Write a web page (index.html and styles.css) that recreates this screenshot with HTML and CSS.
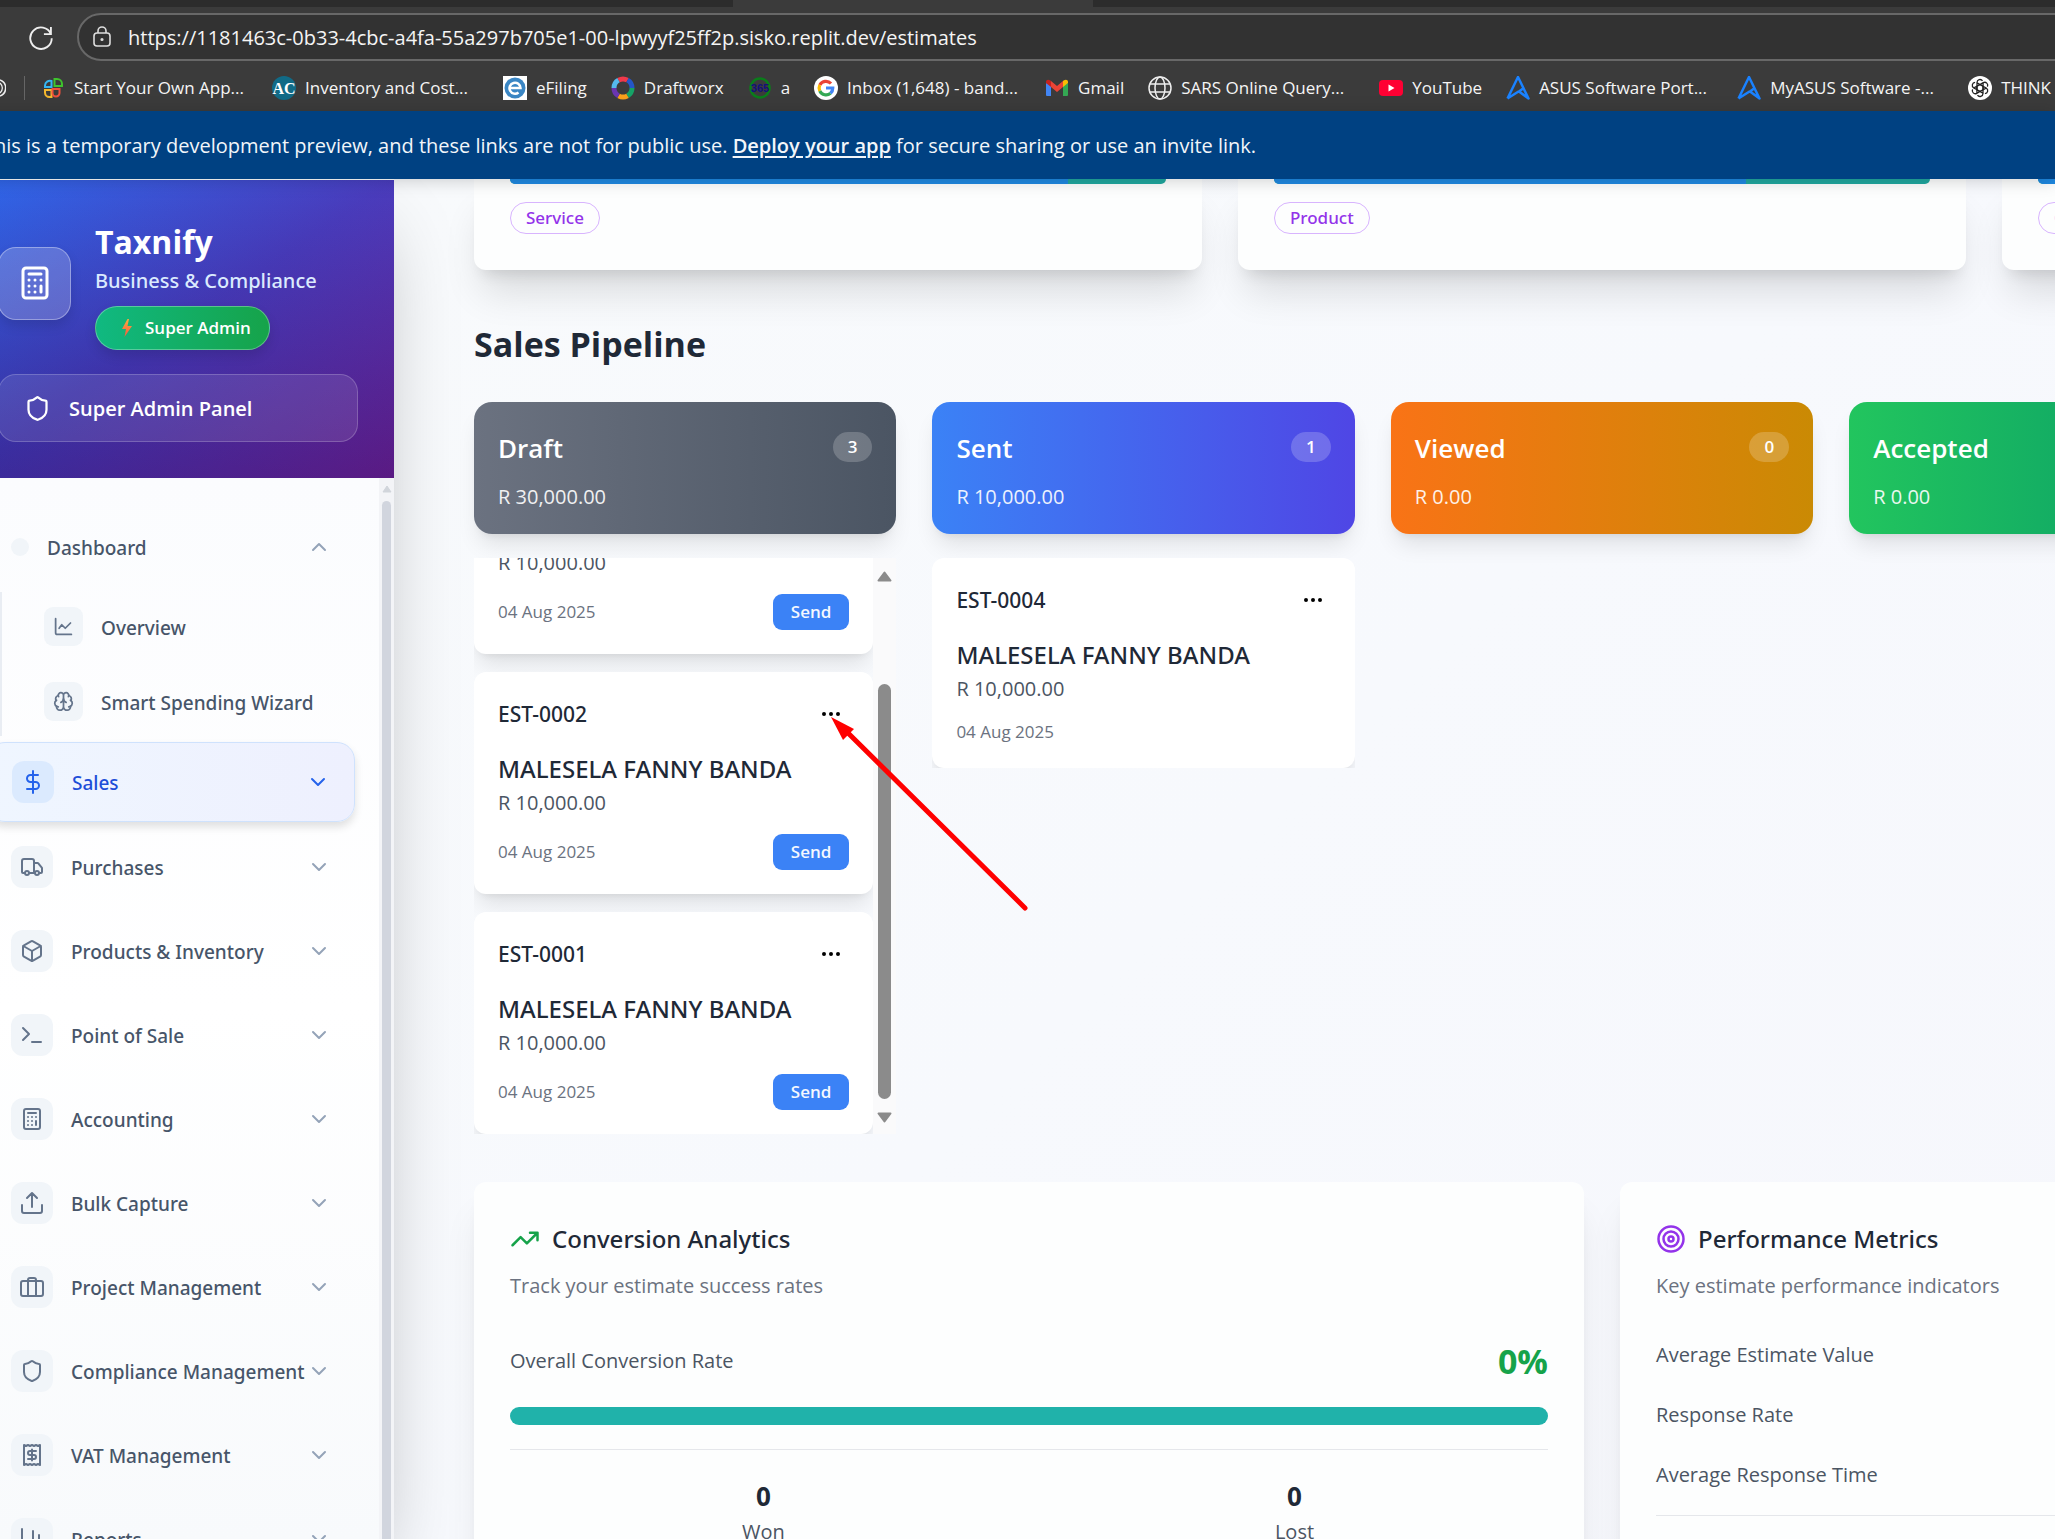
FILE: index.html
```html
<!DOCTYPE html>
<html lang="en">
<head>
<meta charset="utf-8">
<title>Estimates - Taxnify</title>
<link rel="stylesheet" href="styles.css">
</head>
<body>
<svg class="defs" aria-hidden="true">
  <symbol id="calculator" viewBox="0 0 24 24"><rect x="4" y="2" width="16" height="20" rx="2"/><path d="M8 6h8M16 14v4M16 10h.01M12 10h.01M8 10h.01M12 14h.01M8 14h.01M12 18h.01M8 18h.01"/></symbol>
  <symbol id="shield" viewBox="0 0 24 24"><path d="M20 13c0 5-3.500 7.500-7.660 8.950a1 1 0 0 1-.67-.01C7.500 20.500 4 18 4 13V6a1 1 0 0 1 1-1c2 0 4.500-1.200 6.240-2.720a1.170 1.170 0 0 1 1.520 0C14.510 3.810 17 5 19 5a1 1 0 0 1 1 1z"/></symbol>
  <symbol id="down" viewBox="0 0 24 24"><path d="m6 9 6 6 6-6"/></symbol>
  <symbol id="up" viewBox="0 0 24 24"><path d="m18 15-6-6-6 6"/></symbol>
  <symbol id="line" viewBox="0 0 24 24"><path d="M3 3v16a2 2 0 0 0 2 2h16"/><path d="m7 14 3-4 4 4 6-6"/></symbol>
  <symbol id="brain" viewBox="0 0 24 24"><path d="M12 5a3 3 0 1 0-5.997.125 4 4 0 0 0-2.526 5.770 4 4 0 0 0 .556 6.588A4 4 0 1 0 12 18ZM12 5a3 3 0 1 1 5.997.125 4 4 0 0 1 2.526 5.770 4 4 0 0 1-.556 6.588A4 4 0 1 1 12 18Z"/><path d="M15 13a4.500 4.500 0 0 1-3-4 4.500 4.500 0 0 1-3 4M17.599 6.500a3 3 0 0 0 .399-1.375M6.003 5.125A3 3 0 0 0 6.401 6.500M3.477 10.896a4 4 0 0 1 .585-.396M19.938 10.500a4 4 0 0 1 .585.396M6 18a4 4 0 0 1-1.967-.516M19.967 17.484A4 4 0 0 1 18 18"/></symbol>
  <symbol id="dollar" viewBox="0 0 24 24"><path d="M12 1v22M17 5H9.500a3.500 3.500 0 0 0 0 7h5a3.500 3.500 0 0 1 0 7H6"/></symbol>
  <symbol id="truck" viewBox="0 0 24 24"><path d="M14 18V6a2 2 0 0 0-2-2H4a2 2 0 0 0-2 2v11a1 1 0 0 0 1 1h2M15 18H9M19 18h2a1 1 0 0 0 1-1v-3.650a1 1 0 0 0-.22-.624l-3.480-4.350A1 1 0 0 0 17.520 8H14"/><circle cx="17" cy="18" r="2"/><circle cx="7" cy="18" r="2"/></symbol>
  <symbol id="box" viewBox="0 0 24 24"><path d="M21 8a2 2 0 0 0-1-1.730l-7-4a2 2 0 0 0-2 0l-7 4A2 2 0 0 0 3 8v8a2 2 0 0 0 1 1.730l7 4a2 2 0 0 0 2 0l7-4A2 2 0 0 0 21 16Z"/><path d="m3.300 7 8.700 5 8.700-5M12 22V12"/></symbol>
  <symbol id="terminal" viewBox="0 0 24 24"><path d="m3 17 6-6-6-6M12 19h9"/></symbol>
  <symbol id="upload" viewBox="0 0 24 24"><path d="M2 14v6a2 2 0 0 0 2 2h16a2 2 0 0 0 2-2v-6M17 7l-5-5-5 5M12 2v14"/></symbol>
  <symbol id="case" viewBox="0 0 24 24"><rect x="1" y="6" width="22" height="15" rx="2"/><path d="M16 21V5a2 2 0 0 0-2-2h-4a2 2 0 0 0-2 2v16"/></symbol>
  <symbol id="receipt" viewBox="0 0 24 24"><path d="M4 2v20l2-1 2 1 2-1 2 1 2-1 2 1 2-1 2 1V2l-2 1-2-1-2 1-2-1-2 1-2-1-2 1Z"/><path d="M16 8h-6a2 2 0 1 0 0 4h4a2 2 0 1 1 0 4H8M12 17.500v-11"/></symbol>
  <symbol id="chart" viewBox="0 0 24 24"><path d="M2 2v18a2 2 0 0 0 2 2h18M19 17V8M13 17V4M8 17v-3"/></symbol>
  <symbol id="dots" viewBox="0 0 24 24"><circle cx="12" cy="12" r="1"/><circle cx="19" cy="12" r="1"/><circle cx="5" cy="12" r="1"/></symbol>
  <symbol id="trend" viewBox="0 0 24 24"><path d="M22 7 13.500 15.500 8.500 10.500 2 17M16 7h6v6"/></symbol>
  <symbol id="target" viewBox="0 0 24 24"><circle cx="12" cy="12" r="10"/><circle cx="12" cy="12" r="6"/><circle cx="12" cy="12" r="2"/></symbol>
  <symbol id="asus" viewBox="0 0 24 24"><path d="M1.500 22.500 12 1l10.500 21.500-9.500-7 4-3M1.500 22.500l11-7" fill="none" stroke="#1a82ff" stroke-width="2.500" stroke-linejoin="round"/></symbol>
</svg>

<header class="browser">
  <div class="tabs"><div class="tab"></div></div>
  <div class="toolbar">
    <button class="reload" aria-label="Reload"><svg viewBox="0 0 24 24"><path d="M20.500 9.500A9.200 9.200 0 1 0 21.200 13M20.500 3.500v6h-6"/></svg></button>
    <label class="address">
      <svg viewBox="0 0 24 24"><rect x="4" y="8" width="16" height="13" rx="3"/><path d="M8 8V6a4 4 0 0 1 8 0v2"/><circle cx="12" cy="14.500" r=".8"/></svg>
      <input type="text" aria-label="Address" value="https://1181463c-0b33-4cbc-a4fa-55a297b705e1-00-lpwyyf25ff2p.sisko.replit.dev/estimates">
    </label>
  </div>
  <nav class="bookmarks" aria-label="Bookmarks">
    <span class="edge"><svg viewBox="0 0 6 24" fill="none" stroke="#eee" stroke-width="1.500"><path d="M0 4a8.500 8.500 0 0 1 0 16M0 7c3 3 3 7 0 10"/></svg></span>
    <a class="wide" href="#"><svg viewBox="0 0 24 24" fill="none" stroke-width="2"><path d="M10.500 11H4V9.500a5 5 0 0 1 6.500-4.500z" stroke="#35b6f2"/><path d="M13.500 10V3H16a5 5 0 0 1 5 5v2z" stroke="#3fc32d"/><path d="M10.500 14v7H8.500A4.500 4.500 0 0 1 4 16.500V14z" stroke="#f5b82e"/><path d="M11.500 13h7v4a3.500 3.500 0 0 1-7 0z" stroke="#f0503c"/></svg><span>Start Your Own App...</span></a>
    <a class="wide" href="#"><svg viewBox="0 0 24 24"><circle cx="12" cy="12" r="12" fill="#116a86"/><text x="12" y="18" text-anchor="middle" class="ac">AC</text></svg><span>Inventory and Cost...</span></a>
    <a href="#"><svg viewBox="0 0 24 24"><path fill="#fff" d="M0 0h24v24H0z"/><circle cx="12" cy="12" r="10.500" fill="#3a86c4"/><path d="M6.500 12h11a5.500 5.500 0 1 0-2 4.500" fill="none" stroke="#fff" stroke-width="2.500"/></svg><span>eFiling</span></a>
    <a href="#"><svg viewBox="0 0 24 24" fill="none" stroke-width="5"><path d="M7.500 4.200a9 9 0 0 1 9 0" stroke="#f0394b"/><path d="M16.500 4.200A9 9 0 0 1 21 12" stroke="#2456c8"/><path d="M21 12a9 9 0 0 1-4.500 7.800" stroke="#15a266"/><path d="M16.500 19.800a9 9 0 0 1-9 0" stroke="#f9a01b"/><path d="M7.500 19.800A9 9 0 0 1 3 12" stroke="#6a35b0"/><path d="M3 12a9 9 0 0 1 4.500-7.800" stroke="#55b9ee"/></svg><span>Draftworx</span></a>
    <a href="#"><svg viewBox="0 0 24 24"><circle cx="12" cy="12" r="9.500" fill="none" stroke="#0a7d1a" stroke-width="2.500"/><text x="12" y="16" text-anchor="middle" class="n365">365</text></svg><span>a</span></a>
    <a class="wide" href="#"><svg viewBox="0 0 24 24"><circle cx="12" cy="12" r="12" fill="#fff"/><g fill="none" stroke-width="3.200"><path d="M17 7.500A7 7 0 0 0 5.800 9" stroke="#ea4335"/><path d="M5.800 9a7 7 0 0 0 0 6" stroke="#fbbc05"/><path d="M5.800 15A7 7 0 0 0 16.500 17.300" stroke="#34a853"/><path d="M16.500 17.300A7 7 0 0 0 18.800 12H12" stroke="#4285f4"/></g></svg><span>Inbox (1,648) - band...</span></a>
    <a href="#"><svg viewBox="0 0 24 24"><path d="M1 7v12a1 1 0 0 0 1 1h4V9z" fill="#4285f4"/><path d="M18 9v11h4a1 1 0 0 0 1-1V7z" fill="#34a853"/><path d="M18 5v6l5-4V6c0-2-2-3-4-1.700z" fill="#fbbc04"/><path d="M6 5v6l6 5 6-5V5l-6 5z" fill="#ea4335"/><path d="M1 7l5 4V5L5 4.300C3 3 1 4 1 6z" fill="#c5221f"/></svg><span>Gmail</span></a>
    <a class="wide" href="#"><svg viewBox="0 0 24 24" fill="none" stroke="#eee" stroke-width="1.500"><circle cx="12" cy="12" r="11"/><ellipse cx="12" cy="12" rx="5" ry="11"/><path d="M2 8h20M2 16h20"/></svg><span>SARS Online Query...</span></a>
    <a href="#"><svg viewBox="0 0 24 24"><rect y="4" width="24" height="16" rx="4" fill="#ff0033"/><path d="M9.500 8.500v7l6-3.500z" fill="#fff"/></svg><span>YouTube</span></a>
    <a class="wide" href="#"><svg><use href="#asus"/></svg><span>ASUS Software Port...</span></a>
    <a class="wide" href="#"><svg><use href="#asus"/></svg><span>MyASUS Software -...</span></a>
    <a class="wide" href="#"><svg viewBox="0 0 24 24"><circle cx="12" cy="12" r="12" fill="#fff"/><g fill="none" stroke="#222" stroke-width="1.300"><path id="knot" d="M12 8.500 9 10.200V6.500a3 3 0 0 1 5.500-1.600M15 10.200 9.500 7"/><use href="#knot" transform="rotate(60 12 12)"/><use href="#knot" transform="rotate(120 12 12)"/><use href="#knot" transform="rotate(180 12 12)"/><use href="#knot" transform="rotate(240 12 12)"/><use href="#knot" transform="rotate(300 12 12)"/></g></svg><span>THINK</span></a>
  </nav>
</header>

<p class="banner"><span>This is a temporary development preview, and these links are not for public use. <a href="#">Deploy your app</a> for secure sharing or use an invite link.</span></p>

<div class="app">
  <aside class="sidebar">
    <div class="brand">
      <div class="brand-row">
        <div class="logo"><svg class="icon"><use href="#calculator"/></svg></div>
        <div class="brand-text">
          <h1>Taxnify</h1>
          <p>Business &amp; Compliance</p>
          <span class="role"><svg viewBox="0 0 14 18"><defs><linearGradient id="bolt" x2="0" y2="1"><stop stop-color="#fbab40"/><stop offset="1" stop-color="#f4553f"/></linearGradient></defs><path d="M7.500 0 2 10h4L4.500 18 12 7H7.500L9 0z" fill="url(#bolt)"/></svg>Super Admin</span>
        </div>
      </div>
      <button class="panel"><svg class="icon"><use href="#shield"/></svg><span>Super Admin Panel</span></button>
    </div>
    <div class="nav-wrap">
      <nav class="menu">
        <button class="item"><span class="blank"></span><span class="label">Dashboard</span><svg class="icon chev"><use href="#up"/></svg></button>
        <div class="sub">
          <a href="#"><span class="tile"><svg class="icon"><use href="#line"/></svg></span><span class="label">Overview</span></a>
          <a href="#"><span class="tile"><svg class="icon"><use href="#brain"/></svg></span><span class="label">Smart Spending Wizard</span></a>
        </div>
        <button class="item active"><span class="tile"><svg class="icon"><use href="#dollar"/></svg></span><span class="label">Sales</span><svg class="icon chev"><use href="#down"/></svg></button>
        <button class="item"><span class="tile"><svg class="icon"><use href="#truck"/></svg></span><span class="label">Purchases</span><svg class="icon chev"><use href="#down"/></svg></button>
        <button class="item"><span class="tile"><svg class="icon"><use href="#box"/></svg></span><span class="label">Products &amp; Inventory</span><svg class="icon chev"><use href="#down"/></svg></button>
        <button class="item"><span class="tile"><svg class="icon"><use href="#terminal"/></svg></span><span class="label">Point of Sale</span><svg class="icon chev"><use href="#down"/></svg></button>
        <button class="item"><span class="tile"><svg class="icon"><use href="#calculator"/></svg></span><span class="label">Accounting</span><svg class="icon chev"><use href="#down"/></svg></button>
        <button class="item"><span class="tile"><svg class="icon"><use href="#upload"/></svg></span><span class="label">Bulk Capture</span><svg class="icon chev"><use href="#down"/></svg></button>
        <button class="item"><span class="tile"><svg class="icon"><use href="#case"/></svg></span><span class="label">Project Management</span><svg class="icon chev"><use href="#down"/></svg></button>
        <button class="item"><span class="tile"><svg class="icon"><use href="#shield"/></svg></span><span class="label">Compliance Management</span><svg class="icon chev"><use href="#down"/></svg></button>
        <button class="item"><span class="tile"><svg class="icon"><use href="#receipt"/></svg></span><span class="label">VAT Management</span><svg class="icon chev"><use href="#down"/></svg></button>
        <button class="item"><span class="tile"><svg class="icon"><use href="#chart"/></svg></span><span class="label">Reports</span><svg class="icon chev"><use href="#down"/></svg></button>
      </nav>
      <div class="track"><svg viewBox="0 0 10 8"><path d="M5 1 9 7H1z"/></svg><i></i></div>
    </div>
  </aside>

  <main class="main">
    <div class="content">
      <section class="types">
        <article class="card"><div class="split"><i style="width:85%"></i></div><span class="tag">Service</span></article>
        <article class="card"><div class="split"><i style="width:72%"></i></div><span class="tag">Product</span></article>
        <article class="card"><div class="split"><i style="width:80%"></i></div><span class="tag">Consulting</span></article>
      </section>

      <h2>Sales Pipeline</h2>
      <section class="pipeline">
        <div class="column">
          <header class="stage draft"><div><h3>Draft</h3><span class="count">3</span></div><p>R 30,000.00</p></header>
          <div class="scroller">
            <div class="list">
              <article class="estimate"><p>R 10,000.00</p><footer><time>04 Aug 2025</time><button class="send">Send</button></footer></article>
              <article class="estimate"><div class="top"><span>EST-0002</span><button class="more" aria-label="More"><svg class="icon"><use href="#dots"/></svg></button></div><h4>MALESELA FANNY BANDA</h4><p>R 10,000.00</p><footer><time>04 Aug 2025</time><button class="send">Send</button></footer></article>
              <article class="estimate"><div class="top"><span>EST-0001</span><button class="more" aria-label="More"><svg class="icon"><use href="#dots"/></svg></button></div><h4>MALESELA FANNY BANDA</h4><p>R 10,000.00</p><footer><time>04 Aug 2025</time><button class="send">Send</button></footer></article>
            </div>
            <div class="bar"><svg viewBox="0 0 15 11"><path d="M7.500 1.500 13.500 9.500h-12z"/></svg><i></i><svg viewBox="0 0 15 11"><path d="M7.500 9.500 1.500 1.500h12z"/></svg></div>
          </div>
        </div>
        <div class="column">
          <header class="stage sent"><div><h3>Sent</h3><span class="count">1</span></div><p>R 10,000.00</p></header>
          <div class="clip"><article class="estimate"><div class="top"><span>EST-0004</span><button class="more" aria-label="More"><svg class="icon"><use href="#dots"/></svg></button></div><h4>MALESELA FANNY BANDA</h4><p>R 10,000.00</p><footer><time>04 Aug 2025</time></footer></article></div>
        </div>
        <div class="column">
          <header class="stage viewed"><div><h3>Viewed</h3><span class="count">0</span></div><p>R 0.00</p></header>
        </div>
        <div class="column">
          <header class="stage accepted"><div><h3>Accepted</h3><span class="count">0</span></div><p>R 0.00</p></header>
        </div>
        <div class="column"></div>
      </section>

      <section class="reports">
        <article class="report">
          <h3><svg class="icon green"><use href="#trend"/></svg>Conversion Analytics</h3>
          <p class="hint">Track your estimate success rates</p>
          <div class="rate"><span>Overall Conversion Rate</span><strong>0%</strong></div>
          <div class="meter"></div>
          <div class="totals"><div><b>0</b><span>Won</span></div><div><b>0</b><span>Lost</span></div></div>
        </article>
        <article class="report">
          <h3><svg class="icon purple"><use href="#target"/></svg>Performance Metrics</h3>
          <p class="hint">Key estimate performance indicators</p>
          <ul><li>Average Estimate Value</li><li>Response Rate</li><li>Average Response Time</li></ul>
        </article>
      </section>
    </div>
  </main>
</div>
<svg class="pointer" viewBox="0 0 204 204" aria-hidden="true"><path d="M199 196 18 17" stroke="#f00" stroke-width="5" stroke-linecap="round"/><path d="M5 5 28 17 17 28z" fill="#f00"/></svg>
</body>
</html>
```
FILE: styles.css
```css
* { box-sizing: border-box; margin: 0; padding: 0; }
body {
  position: relative;
  display: flex;
  flex-direction: column;
  height: 100vh;
  overflow: hidden;
  font: 400 20px/30px "Open Sans", "Noto Sans", sans-serif;
  color: #1f2937;
  background: #f8fafc;
}
button, input { font: inherit; color: inherit; border: 0; background: none; }
a { color: inherit; text-decoration: none; }
ul { list-style: none; }
.defs { position: absolute; width: 0; height: 0; }
.icon { flex: none; width: 24px; height: 24px; fill: none; stroke: currentColor; stroke-width: 2; stroke-linecap: round; stroke-linejoin: round; }

/* Browser chrome */
.browser { flex: none; height: 111px; overflow: hidden; background: #3b3b3b; color: #f5f5f5; }
.tabs { display: flex; justify-content: flex-start; height: 7px; background: #2c2c2c; }
.tab { width: 360px; margin-left: 733px; background: #3b3b3b; }
.toolbar { display: flex; align-items: center; gap: 22px; height: 60px; padding-left: 27px; }
.reload { display: flex; }
.reload svg { width: 28px; height: 28px; fill: none; stroke: #eee; stroke-width: 1.600; }
.address { display: flex; flex: 1; align-items: center; gap: 14px; height: 48px; padding-left: 11px; margin-right: -40px; border: 2px solid #686868; border-radius: 24px; background: #323232; }
.address svg { flex: none; width: 24px; height: 24px; fill: none; stroke: #ddd; stroke-width: 1.600; }
.address input { flex: 1; padding-top: 2px; outline: 0; }
.bookmarks { display: flex; align-items: center; height: 42px; font-size: 17px; white-space: nowrap; }
.edge { flex: none; width: 25px; height: 24px; margin-right: 16px; border-right: 1px solid #666; }
.bookmarks .edge svg { display: block; width: 6px; }
.bookmarks a { display: flex; flex: none; align-items: center; gap: 9px; margin-right: 24px; }
.bookmarks .wide { width: 207px; }
.bookmarks svg { flex: none; width: 24px; height: 24px; }
.ac { font: 700 16px "Liberation Serif", serif; fill: #fff; }
.n365 { font: 700 11px "Liberation Sans", sans-serif; fill: #12127a; }

.banner { position: relative; z-index: 3; display: flex; flex: none; align-items: center; height: 68px; padding-top: 1px; margin-left: -17px; background: #004182; color: #f2f6fa; box-shadow: 0 2px 16px rgba(0, 0, 0, .18); white-space: nowrap; }
.banner a { font-weight: 600; text-decoration: underline; text-underline-offset: 3px; }

/* Shell */
.app { display: flex; flex: 1; min-height: 0; }
.sidebar { position: relative; z-index: 2; display: flex; flex: none; flex-direction: column; width: 432px; margin-left: -38px; background: #fff; box-shadow: 0 38px 75px -18px rgba(0, 0, 0, .28); }
.brand { display: flex; flex-direction: column; gap: 24px; padding: 36px; margin-top: 1px; color: #fff; background: linear-gradient(to bottom, rgba(255, 255, 255, .04), rgba(0, 0, 0, .16)), linear-gradient(to bottom right, #2563eb, #4335bb 50%, #6b1f9c); }
.brand-row { display: flex; align-items: center; gap: 24px; }
.logo { display: flex; flex: none; align-items: center; justify-content: center; width: 73px; height: 73px; border: 1px solid rgba(255, 255, 255, .35); border-radius: 18px; background: rgba(255, 255, 255, .2); box-shadow: 0 6px 12px rgba(0, 0, 0, .12); }
.logo .icon { width: 36px; height: 36px; }
.brand-text { display: flex; flex-direction: column; align-items: flex-start; }
.brand h1 { font-size: 32px; line-height: 52px; }
.brand-text p { margin-bottom: 12px; line-height: 26px; font-weight: 500; font-family: "Noto Sans", sans-serif; color: #dbeafe; white-space: nowrap; }
.role { display: flex; align-items: center; gap: 11px; height: 44px; padding: 0 18px 0 24px; border: 1px solid rgba(255, 255, 255, .3); border-radius: 22px; background: linear-gradient(to right, #10b981, #16a34a); box-shadow: 0 6px 12px rgba(0, 0, 0, .12); font-size: 17px; font-weight: 600; }
.role svg { width: 14px; height: 18px; }
.panel { display: flex; align-items: center; gap: 18px; height: 68px; padding-left: 25px; border: 1px solid rgba(255, 255, 255, .2); border-radius: 18px; background: rgba(255, 255, 255, .1); font-weight: 600; }
.panel span { padding-top: 2px; }
.panel .icon { width: 27px; height: 27px; }
.nav-wrap { display: flex; flex: 1; min-height: 0; overflow: hidden; background: linear-gradient(to bottom, #fbfcfe, #fff 50%, #f8fafc); }
.menu { display: flex; flex: 1; min-width: 0; flex-direction: column; gap: 6px; padding: 30px 24px 0 25px; color: #475569; font: 500 19px/30px "Noto Sans", sans-serif; white-space: nowrap; }
.item { display: flex; flex: none; align-items: center; height: 78px; padding: 0 24px; border-radius: 18px; }
.label { padding: 2px 0 0 18px; }
.chev { margin-left: auto; color: #94a3b8; }
.blank { width: 18px; height: 18px; border-radius: 9px; background: #f1f5f9; }
.tile { display: flex; flex: none; align-items: center; justify-content: center; width: 42px; height: 42px; border-radius: 12px; background: #f1f5f9; color: #64748b; }
.active { height: 80px; border: 1px solid #cfe2fd; background: linear-gradient(to right, #eff6ff, #eef0fe); color: #1d4ed8; box-shadow: 0 5px 8px rgba(0, 0, 0, .12); }
.active .tile { background: #dbeafe; color: #2563eb; }
.active .chev { color: #2563eb; }
.sub { display: flex; flex: none; flex-direction: column; gap: 6px; margin-left: 13px; padding-left: 42px; border-left: 2px solid #e9edf3; }
.sub a { display: flex; align-items: center; height: 69px; }
.sub .tile { width: 39px; height: 39px; border-radius: 9px; }
.sub .icon { width: 21px; height: 21px; }
.track { display: flex; flex: none; flex-direction: column; align-items: center; gap: 8px; width: 15px; padding-top: 7px; background: #f3f4f7; }
.track svg { width: 10px; height: 8px; fill: #d1d5db; stroke: #d1d5db; stroke-linejoin: round; }
.track i { flex: 1; width: 9px; border-radius: 5px 5px 0 0; background: #d1d5de; }

/* Main */
.main { flex: 1; min-width: 0; overflow: hidden; padding-left: 80px; background: linear-gradient(135deg, #f8fafc, #f7f9fd 50%, #f6f7fc); }
.content { min-width: 2256px; }
.types { display: grid; grid-template-columns: repeat(3, 1fr); gap: 36px; }
.card { display: flex; flex-direction: column; align-items: flex-start; gap: 18px; padding: 0 36px 36px; border-radius: 0 0 12px 12px; background: #fdfefe; box-shadow: 0 30px 38px -8px rgba(0, 0, 0, .12), 0 12px 15px -9px rgba(0, 0, 0, .12); }
.split { align-self: stretch; height: 5px; border-radius: 0 0 9px 9px; overflow: hidden; background: #20a89f; }
.split i { display: block; height: 100%; background: #1f89e2; }
.tag { height: 32px; padding: 0 15px; border: 1px solid #d8b4fe; border-radius: 16px; color: #9333ea; font: 500 17px/30px "Noto Sans", sans-serif; }
h2 { margin: 47px 0 31px; font-size: 34px; line-height: 54px; }
.pipeline { display: grid; grid-template-columns: repeat(5, 1fr); gap: 36px; }
.column { display: flex; flex-direction: column; gap: 24px; }
.stage { display: flex; flex-direction: column; gap: 14px; padding: 24px 24px 22px; border-radius: 18px; color: #fff; box-shadow: 0 15px 22px -5px rgba(0, 0, 0, .1), 0 6px 9px -6px rgba(0, 0, 0, .1); }
.stage div { display: flex; align-items: center; justify-content: space-between; height: 42px; }
.stage h3 { padding-top: 2px; font-size: 26px; font-weight: 600; }
.stage p { opacity: .9; }
.count { padding: 0 15px; border-radius: 15px; background: rgba(255, 255, 255, .2); font-size: 17px; font-weight: 600; }
.draft { background: linear-gradient(to right, #6b7280, #4b5563); }
.sent { background: linear-gradient(to right, #3b82f6, #4f46e5); }
.viewed { background: linear-gradient(to right, #f97316, #ca8a04); }
.accepted { background: linear-gradient(to right, #22c55e, #059669); }
.scroller { display: flex; height: 576px; overflow: hidden; }
.clip { overflow: hidden; }
.list { display: flex; flex: 1; flex-direction: column; justify-content: flex-end; gap: 18px; }
.estimate { display: flex; flex: none; flex-direction: column; padding: 24px; border-radius: 12px; background: #fff; box-shadow: 0 15px 22px -5px rgba(0, 0, 0, .1), 0 6px 9px -6px rgba(0, 0, 0, .1); }
.top { display: flex; align-items: center; justify-content: space-between; height: 36px; margin-bottom: 18px; font: 500 21px/30px "Noto Sans", sans-serif; }
.more { display: flex; padding: 6px; color: #000; }
.estimate h4 { font: 500 24px/38px "Noto Sans", sans-serif; }
.estimate p { color: #4b5563; }
.estimate footer { display: flex; align-items: center; justify-content: space-between; margin-top: 16px; font-size: 17px; line-height: 24px; color: #6b7280; }
.send { height: 36px; padding: 0 18px; border-radius: 9px; background: #3b82f6; color: #f4f8ff; font-weight: 600; }
.bar { display: flex; flex: none; flex-direction: column; align-items: center; width: 23px; padding: 13px 0 11px; background: #fafafb; }
.bar svg { width: 15px; height: 11px; fill: #8b8b8b; stroke: #8b8b8b; stroke-width: 2; stroke-linejoin: round; }
.bar i { width: 13px; height: 415px; margin: auto 0 13px; border-radius: 7px; background: #8b8b8b; }

.reports { display: grid; grid-template-columns: 1fr 1fr; gap: 36px; margin-top: 48px; }
.report { padding: 36px; border-radius: 12px; background: #fdfefe; box-shadow: 0 30px 38px -8px rgba(0, 0, 0, .1), 0 12px 15px -9px rgba(0, 0, 0, .1); }
.report h3 { display: flex; align-items: center; gap: 12px; font: 500 24px/42px "Noto Sans", sans-serif; }
.report h3 .icon { width: 30px; height: 30px; }
.green { color: #16a34a; }
.purple { color: #9333ea; }
.hint { margin: 11px 0 34px; color: #6b7280; }
.rate { display: flex; align-items: center; justify-content: space-between; height: 52px; margin-bottom: 20px; color: #4b5563; }
.rate strong { font-size: 34px; color: #16a34a; }
.meter { height: 18px; border-radius: 9px; background: #20b2aa; }
.totals { display: grid; grid-template-columns: 1fr 1fr; gap: 24px; margin-top: 24px; padding-top: 25px; border-top: 1px solid #e5e7eb; text-align: center; }
.totals div { display: flex; flex-direction: column; }
.totals b { font-size: 26px; line-height: 42px; }
.totals span { color: #4b5563; }
.report ul { display: flex; flex-direction: column; gap: 24px; padding: 2px 0 22px; border-bottom: 1px solid #e5e7eb; color: #4b5563; }
.report li { line-height: 36px; }

/* Annotation arrow over the page */
.pointer { position: absolute; left: 826px; top: 712px; z-index: 5; width: 204px; height: 204px; }
```
